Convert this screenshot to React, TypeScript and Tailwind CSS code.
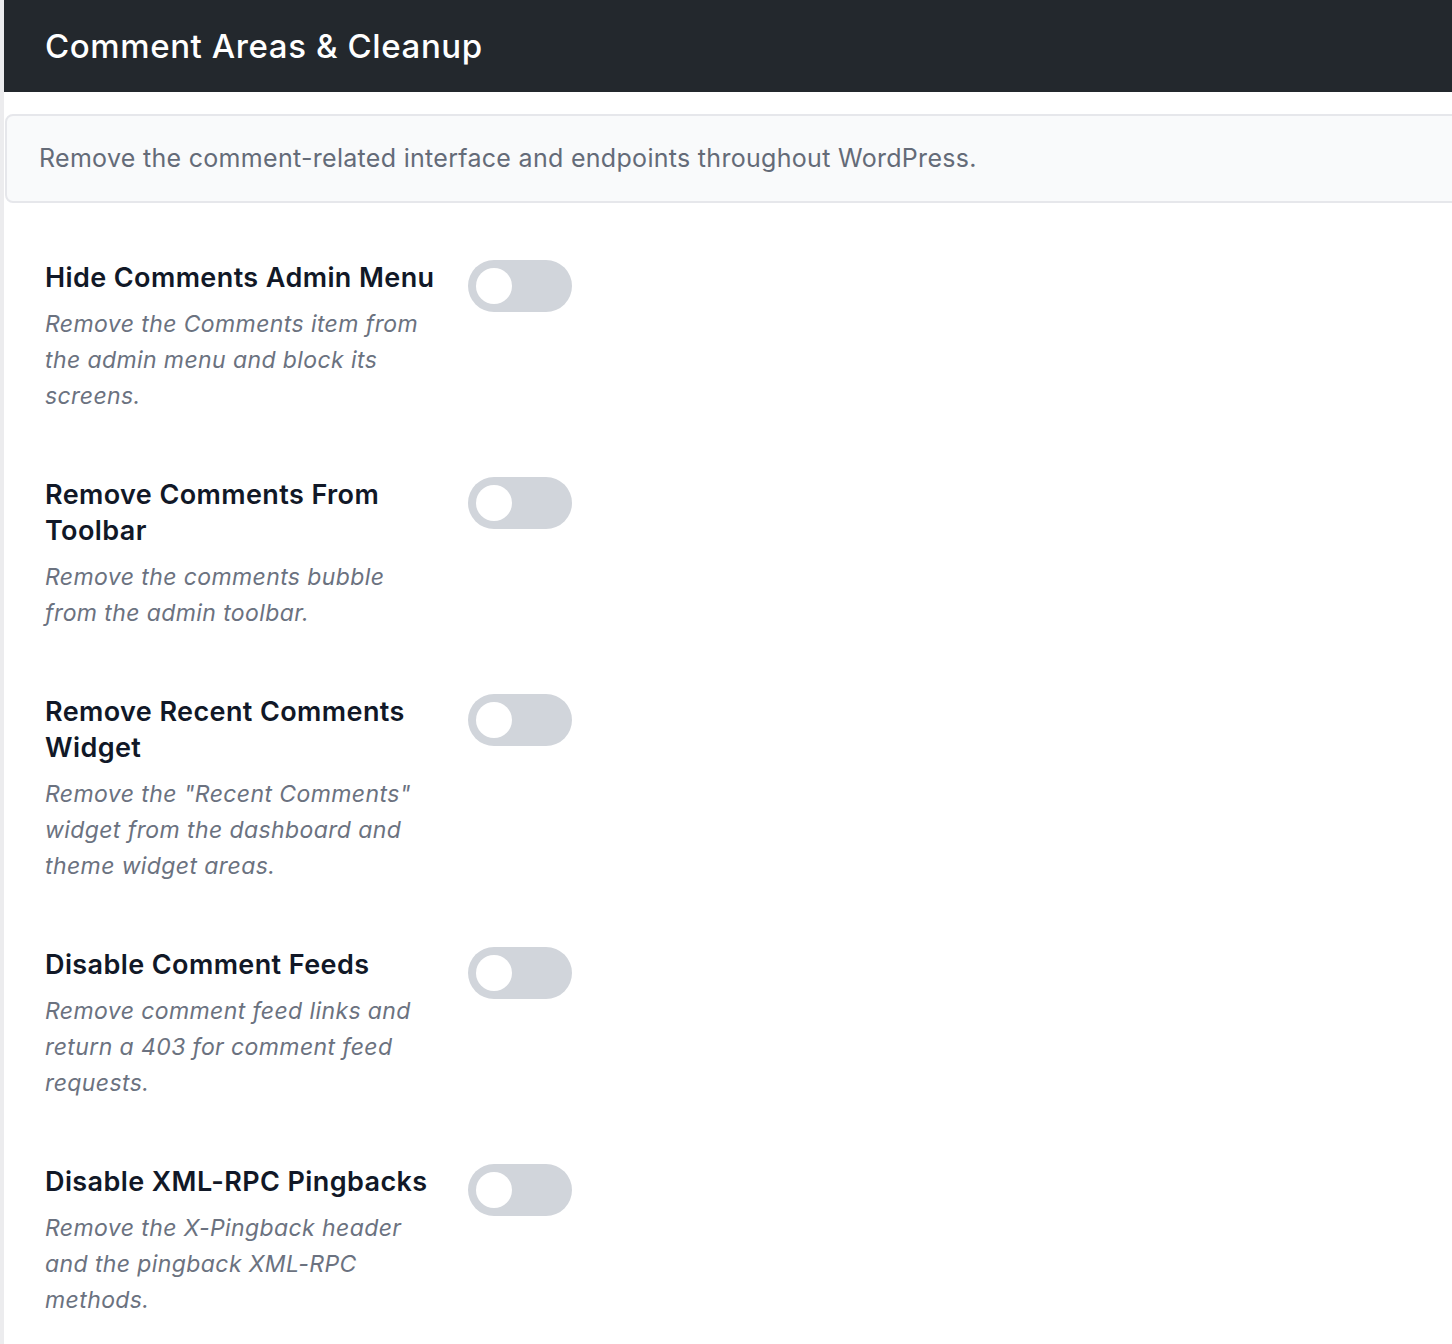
const settings = [
  {
    title: "Hide Comments Admin Menu",
    description: "Remove the Comments item from the admin menu and block its screens.",
  },
  {
    title: "Remove Comments From Toolbar",
    description: "Remove the comments bubble from the admin toolbar.",
  },
  {
    title: "Remove Recent Comments Widget",
    description: 'Remove the "Recent Comments" widget from the dashboard and theme widget areas.',
  },
  {
    title: "Disable Comment Feeds",
    description: "Remove comment feed links and return a 403 for comment feed requests.",
  },
  {
    title: "Disable XML-RPC Pingbacks",
    description: "Remove the X-Pingback header and the pingback XML-RPC methods.",
  },
];

function Toggle() {
  return (
    <button
      type="button"
      role="switch"
      aria-checked="false"
      className="flex h-[52px] w-[104px] shrink-0 items-center rounded-full bg-[#d1d5db] px-[8px]"
    >
      <span className="h-[36px] w-[36px] rounded-full bg-white" />
    </button>
  );
}

export default function App() {
  return (
    <div className="flex min-h-screen bg-[#ececee] pl-[4px] font-['Inter','Noto_Sans',sans-serif]">
      <div className="flex-1 overflow-hidden bg-white">
        <div className="flex h-[92px] items-center bg-[#23282d] px-[41px]">
          <h1 className="mt-[2px] text-[33px] font-medium tracking-[0.6px] text-white">Comment Areas &amp; Cleanup</h1>
        </div>

        <div className="ml-[1px] mr-[-40px] mt-[22px] flex h-[89px] items-center rounded-lg border-2 border-[#e6e7eb] bg-[#f9fafb] px-[32px]">
          <p className="text-[25px] tracking-[0.3px] text-[#646b78]">
            Remove the comment-related interface and endpoints throughout WordPress.
          </p>
        </div>

        <div className="flex flex-col gap-[63px] px-[41px] pb-[40px] pt-[57px]">
          {settings.map((item) => (
            <div key={item.title} className="flex items-start gap-[23px]">
              <div className="w-[400px]">
                <h2 className="w-[394px] text-[27px] font-semibold leading-[36px] tracking-[0.4px] text-[#111827]">
                  {item.title}
                </h2>
                <p className="mt-[10px] w-[394px] text-[23px] italic leading-[36px] tracking-[0.4px] text-[#6b7280]">
                  {item.description}
                </p>
              </div>
              <Toggle />
            </div>
          ))}
        </div>
      </div>
    </div>
  );
}
